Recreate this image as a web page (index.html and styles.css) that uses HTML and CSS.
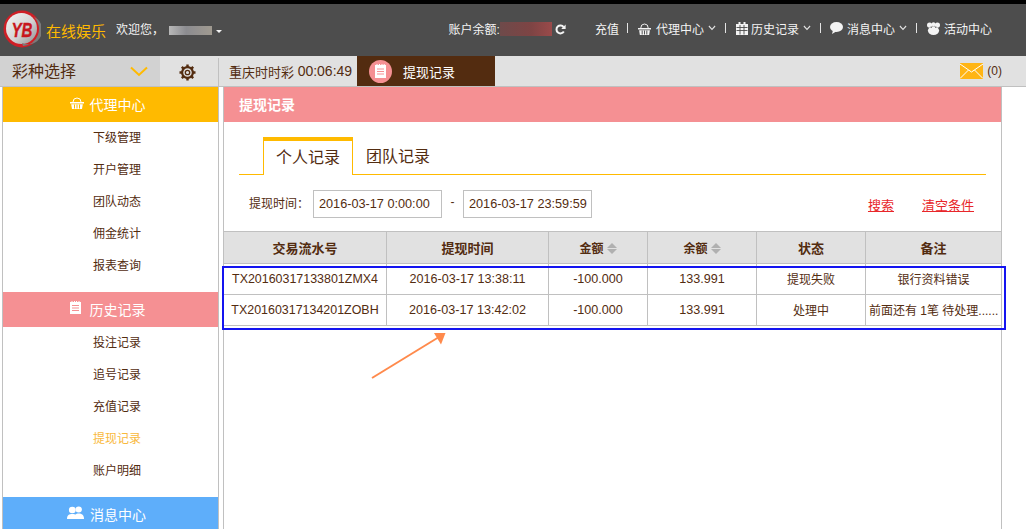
FILE: index.html
```html
<!DOCTYPE html>
<html lang="zh-CN">
<head>
  <meta charset="UTF-8">
  <title>提现记录</title>
  <link rel="stylesheet" href="styles.css">
</head>
<body>
  <div class="page">
    <div class="header">
      <div class="logo">
        <svg width="38" height="38" viewBox="0 0 38 38">
          <defs>
            <linearGradient id="silver" x1="0" y1="0" x2="1" y2="1">
              <stop offset="0" stop-color="#f4f4f4"/>
              <stop offset="0.55" stop-color="#d4d4d4"/>
              <stop offset="1" stop-color="#8e8e8e"/>
            </linearGradient>
          </defs>
          <circle cx="19" cy="19" r="18.5" fill="#cf1f26"/>
          <circle cx="18.5" cy="18.5" r="15.5" fill="url(#silver)"/>
          <path d="M31 7A17 17 0 0 1 20 36L19 33A14 14 0 0 0 31 7Z" fill="#7a7a7a"/>
          <text x="19" y="26.5" class="logo-mark" textLength="21" lengthAdjust="spacingAndGlyphs">YB</text>
        </svg>
        <span class="logo-name">在线娱乐</span>
      </div>
      <div class="welcome">欢迎您，</div>
      <div class="user-blur"></div>
      <div class="caret"></div>

      <div class="nav">
        <span class="balance-label">账户余额:</span>
        <span class="balance-blur"></span>
        <svg class="refresh" width="11" height="11" viewBox="0 0 12 12"><path d="M9.6 8.2A4.3 4.3 0 1 1 9.4 3.4" fill="none" stroke="#f4f4f4" stroke-width="2.2"/><path d="M11.6 0.6V5.4H6.8Z" fill="#f4f4f4"/></svg>
        <a class="nav-link first">充值</a>
        <i class="sep"></i>
        <a class="nav-link gap-5">
          <svg width="13" height="13" viewBox="0 0 14 13" preserveAspectRatio="none"><path d="M3 6A4 4 0 0 1 11 6" fill="none" stroke="#f4f4f4"/><path d="M0 6H14V7.5H0ZM1.2 8.3H12.8L12 13H2Z" fill="#f4f4f4"/><path d="M4.5 8.5V12.5M7 8.5V12.5M9.5 8.5V12.5" stroke="#4d4d4d"/></svg>
          <span>代理中心</span>
          <svg class="chev" width="8" height="6" viewBox="0 0 9 6" preserveAspectRatio="none"><path d="M1 1L4.5 4.5L8 1" fill="none" stroke="#e4e4e4" stroke-width="1.2"/></svg>
        </a>
        <i class="sep sep-wide"></i>
        <a class="nav-link gap-3">
          <svg width="12" height="13" viewBox="0 0 12 13"><path d="M2.5 0H4.5V2H7.5V0H9.5V2H12V13H0V2H2.5Z" fill="#f4f4f4"/><path d="M0.5 5.5H11.5M0.5 8.5H11.5M4 3V12.5M8 3V12.5" stroke="#4d4d4d" stroke-width="0.9"/></svg>
          <span>历史记录</span>
          <svg class="chev" width="8" height="6" viewBox="0 0 9 6" preserveAspectRatio="none"><path d="M1 1L4.5 4.5L8 1" fill="none" stroke="#e4e4e4" stroke-width="1.2"/></svg>
        </a>
        <i class="sep sep-wide sep-near"></i>
        <a class="nav-link">
          <svg width="13" height="12" viewBox="0 0 13 12"><ellipse cx="6.5" cy="5" rx="6.5" ry="5" fill="#f4f4f4"/><path d="M3 8L2 12L7 9Z" fill="#f4f4f4"/></svg>
          <span>消息中心</span>
          <svg class="chev" width="8" height="6" viewBox="0 0 9 6" preserveAspectRatio="none"><path d="M1 1L4.5 4.5L8 1" fill="none" stroke="#e4e4e4" stroke-width="1.2"/></svg>
        </a>
        <i class="sep sep-wide"></i>
        <a class="nav-link">
          <svg width="13" height="13" viewBox="0 0 13 13"><circle cx="2.6" cy="3" r="2.6" fill="#f4f4f4"/><circle cx="10.4" cy="3" r="2.6" fill="#f4f4f4"/><circle cx="6.5" cy="2.2" r="2" fill="#f4f4f4"/><ellipse cx="6.5" cy="8.6" rx="5.6" ry="4.4" fill="#f4f4f4"/><path d="M3.5 5.2H5M8 5.2H9.5" stroke="#4d4d4d"/></svg>
          <span>活动中心</span>
        </a>
      </div>
    </div>

    <div class="subbar">
      <div class="lottery-select">
        <span class="lottery-name">彩种选择</span>
        <svg width="18" height="11" viewBox="0 0 18 11"><path d="M1 1.5L9 9L17 1.5" fill="none" stroke="#ffba00" stroke-width="2"/></svg>
      </div>
      <div class="gear">
        <svg width="17" height="17" viewBox="0 0 17 17"><circle cx="8.5" cy="8.5" r="5.4" fill="none" stroke="#532c10" stroke-width="2.2"/><circle cx="8.5" cy="8.5" r="2.2" fill="none" stroke="#532c10" stroke-width="1.3"/><path d="M8.5 0.5V3M8.5 14V16.5M0.5 8.5H3M14 8.5H16.5M2.8 2.8L4.6 4.6M12.4 12.4L14.2 14.2M2.8 14.2L4.6 12.4M12.4 4.6L14.2 2.8" stroke="#532c10" stroke-width="2.4"/></svg>
      </div>
      <div class="countdown">重庆时时彩 <span class="countdown-time">00:06:49</span></div>
      <div class="current-tab">
        <span class="current-icon">
          <svg width="11" height="14" viewBox="0 0 11 14"><path d="M0 1H11V14H0Z" fill="#fff"/><path d="M2 0V2.5M4.5 0V2.5M7 0V2.5M9.2 0V2.5" stroke="#fff"/><path d="M2 5H9M2 7.5H9M2 10H9" stroke="#f59093"/></svg>
        </span>
        提现记录
      </div>
      <div class="mail">
        <svg width="23" height="16" viewBox="0 0 23 16"><rect width="23" height="16" fill="#ffb515"/><path d="M0 1L11.5 9L23 1M0 15.5L8.5 7M23 15.5L14.5 7" fill="none" stroke="#fff" stroke-width="1"/></svg>
        <span>(0)</span>
      </div>
    </div>

    <div class="content">
      <div class="sidebar">
        <div class="side-head side-orange">
          <svg width="14" height="13" viewBox="0 0 14 13"><path d="M3 6A4 4 0 0 1 11 6" fill="none" stroke="#fff"/><path d="M0 6H14V7.5H0ZM1.2 8.3H12.8L12 13H2Z" fill="#fff"/><path d="M4.5 8.5V12.5M7 8.5V12.5M9.5 8.5V12.5" stroke="#ffba00"/></svg>
          <span>代理中心</span>
        </div>
        <ul class="side-list">
          <li>下级管理</li>
          <li>开户管理</li>
          <li>团队动态</li>
          <li>佣金统计</li>
          <li>报表查询</li>
        </ul>
        <div class="side-head side-pink">
          <svg width="11" height="13" viewBox="0 0 11 13"><path d="M0 1H11V13H0Z" fill="#fff"/><path d="M2 0V2M4.5 0V2M6.5 0V2M9 0V2" stroke="#fff"/><path d="M2 4.5H9M2 7H9M2 9.5H9" stroke="#f59093"/></svg>
          <span>历史记录</span>
        </div>
        <ul class="side-list">
          <li>投注记录</li>
          <li>追号记录</li>
          <li>充值记录</li>
          <li class="active">提现记录</li>
          <li>账户明细</li>
        </ul>
        <div class="side-head side-blue">
          <svg width="17" height="13" viewBox="0 0 16 13" preserveAspectRatio="none"><circle cx="11" cy="3.5" r="3" fill="#fff"/><path d="M7 13C7 9 8 7.5 11 7.5S16 9 16 13Z" fill="#fff"/><circle cx="5" cy="4" r="3.2" fill="#fff"/><path d="M0 13C0 9 2 8 5 8S10 9 10 13Z" fill="#fff"/></svg>
          <span>消息中心</span>
        </div>
      </div>

      <div class="main">
        <div class="main-head">提现记录</div>
        <div class="tabs">
          <a class="tab selected">个人记录</a>
          <a class="tab">团队记录</a>
        </div>
        <div class="filter">
          <label>提现时间：</label>
          <input type="text" value="2016-03-17 0:00:00">
          <span class="dash">-</span>
          <input type="text" value="2016-03-17 23:59:59">
          <div class="filter-links">
            <a href="#">搜索</a>
            <a href="#">清空条件</a>
          </div>
        </div>
        <table>
          <colgroup>
            <col class="c-no"><col class="c-time"><col class="c-amount"><col class="c-bal"><col class="c-state"><col class="c-note">
          </colgroup>
          <thead>
            <tr>
              <th>交易流水号</th>
              <th>提现时间</th>
              <th class="sortable">金额<i class="sort"></i></th>
              <th class="sortable">余额<i class="sort"></i></th>
              <th>状态</th>
              <th>备注</th>
            </tr>
          </thead>
          <tbody>
            <tr>
              <td class="num serial">TX20160317133801ZMX4</td>
              <td class="num">2016-03-17 13:38:11</td>
              <td class="num">-100.000</td>
              <td class="num">133.991</td>
              <td class="text">提现失败</td>
              <td class="text">银行资料错误</td>
            </tr>
            <tr>
              <td class="num serial">TX20160317134201ZOBH</td>
              <td class="num">2016-03-17 13:42:02</td>
              <td class="num">-100.000</td>
              <td class="num">133.991</td>
              <td class="text">处理中</td>
              <td class="text note">前面还有 1笔 待处理......</td>
            </tr>
          </tbody>
        </table>
      </div>
    </div>

    <!-- annotation drawn over the screenshot -->
    <div class="mark-box"></div>
    <svg class="mark-arrow" width="80" height="52" viewBox="0 0 80 52"><path d="M1 48L68 7" stroke="#ff8a4c" stroke-width="2" fill="none"/><path d="M63 3H74.5L70 14.5Z" fill="#ff8a4c"/></svg>
  </div>
</body>
</html>
```

FILE: styles.css
```css
body {
  margin: 0;
  background-color: #fff;
  color: #532c10;
  font-family: "Liberation Sans", "Noto Sans CJK SC", sans-serif;
  font-size: 12px;
}

.page {
  position: relative;
  height: 529px;
  overflow: hidden;
}

/* top bar */
.header {
  display: flex;
  align-items: center;
  height: 52px;
  border-top: 4px solid #000;
  background-color: #4d4d4d;
  color: #f4f4f4;
}

.logo {
  display: flex;
  align-items: center;
  margin-left: 3px;
}

.logo svg {
  display: block;
  margin-bottom: 2px;
}

.logo-mark {
  font-family: "Liberation Sans", sans-serif;
  font-size: 21px;
  font-weight: bold;
  font-style: italic;
  text-anchor: middle;
  fill: #c8161d;
  stroke: #c8161d;
  stroke-width: 0.4px;
}

.logo-name {
  margin-left: 5px;
  color: #ffba00;
  font-size: 15px;
}

.welcome {
  margin-left: 10px;
  margin-bottom: 4px;
  width: 53px;
}

.user-blur {
  width: 43px;
  height: 9px;
  background: linear-gradient(90deg, #b8b8b8, #8c8c90 40%, #a09a90);
}

.caret {
  width: 0;
  height: 0;
  margin: 2px 0 0 4px;
  border-left: 3.5px solid transparent;
  border-right: 3.5px solid transparent;
  border-top: 3.5px solid #f4f4f4;
}

.nav {
  display: flex;
  align-items: center;
  margin-left: auto;
  padding-right: 34px;
  margin-bottom: 4px;
}

.balance-blur {
  width: 52px;
  height: 14px;
  margin-top: 2px;
  background: linear-gradient(90deg, #6e4a4a, #7e4444 60%, #9a4a4a);
}

.refresh {
  margin-left: 3px;
  margin-top: 2px;
}

.nav-link {
  display: flex;
  align-items: center;
  gap: 4px;
}

.nav-link.first {
  margin-left: 29px;
}

.nav-link.gap-5 {
  gap: 5px;
}

.nav-link.gap-3 {
  gap: 3px;
}

.nav-link.gap-3 .chev {
  margin-left: 1px;
}

.nav-link.gap-5 .chev {
  margin-left: -1px;
}

.sep {
  width: 1px;
  height: 10px;
  margin: 0 10px 0 8px;
  background-color: #e4e4e4;
}

.sep-wide {
  margin-left: 9px;
}

.sep-near {
  margin-right: 9px;
}

/* second bar */
.subbar {
  display: flex;
  align-items: stretch;
  height: 30px;
  background-color: #e1e1e1;
}

.lottery-select {
  display: flex;
  align-items: center;
  justify-content: space-between;
  box-sizing: border-box;
  width: 160px;
  padding: 0 12px;
  background-color: #d2d2d2;
  font-size: 16px;
}

.lottery-name {
  margin-bottom: 2px;
}

.gear {
  display: flex;
  align-items: center;
  justify-content: center;
  box-sizing: border-box;
  width: 59px;
  padding-right: 3px;
  border-right: 1px solid #c0c0c0;
  margin: 2px 0 0;
}

.countdown {
  display: flex;
  align-items: center;
  width: 128px;
  margin-left: 10px;
  font-size: 13px;
  white-space: pre;
}

.countdown-time {
  font-size: 14px;
}

.current-tab {
  display: flex;
  align-items: center;
  gap: 11px;
  width: 126px;
  padding-left: 12px;
  background-color: #532c10;
  color: #fff;
  font-size: 13px;
}

.current-icon {
  display: flex;
  align-items: center;
  justify-content: center;
  width: 23px;
  height: 23px;
  border-radius: 50%;
  background-color: #f59093;
}

.mail {
  display: flex;
  align-items: center;
  gap: 4px;
  margin-left: auto;
  padding-right: 24px;
}

/* sidebar + main */
.content {
  display: flex;
  align-items: flex-start;
  border-top: 1px solid #c0c0c0;
}

.sidebar {
  box-sizing: border-box;
  width: 217px;
  height: 442px;
  margin-left: 2px;
  border-left: 1px solid #c0c0c0;
  border-right: 1px solid #c0c0c0;
}

.side-head {
  display: flex;
  align-items: center;
  justify-content: center;
  gap: 6px;
  box-sizing: border-box;
  height: 35px;
  padding: 0 6px 2px 0;
  color: #fff;
  font-size: 14px;
}

.side-head svg {
  margin-bottom: 2px;
}

.side-orange {
  background-color: #ffba00;
}

.side-pink {
  gap: 9px;
  background-color: #f59093;
}

.side-blue {
  padding-right: 8px;
  background-color: #5eaefa;
}

.side-list {
  list-style: none;
  margin: 0;
  padding: 0 0 10px 90px;
}

.side-list li {
  height: 32px;
  line-height: 32px;
}

.side-list li.active {
  color: #f9b93c;
}

.main {
  box-sizing: border-box;
  width: 779px;
  height: 442px;
  margin-left: 4px;
  border-left: 1px solid #c0c0c0;
  border-right: 1px solid #c0c0c0;
}

.main-head {
  height: 35px;
  line-height: 37px;
  padding-left: 15px;
  background-color: #f59093;
  color: #fff;
  font-size: 14px;
  font-weight: bold;
}

.tabs {
  display: flex;
  height: 37px;
  margin: 15px 15px 0;
  padding-left: 24px;
  border-bottom: 1px solid #ffba00;
}

.tab {
  box-sizing: border-box;
  width: 90px;
  height: 38px;
  line-height: 40px;
  text-align: center;
  font-size: 16px;
}

.tab.selected {
  border: 1px solid #ffba00;
  border-top-width: 4px;
  border-bottom: none;
  background-color: #fff;
  line-height: 33px;
}

.filter {
  display: flex;
  align-items: center;
  height: 28px;
  margin-top: 15px;
  padding: 0 27px 0 25px;
}

.filter label {
  width: 64px;
  margin-bottom: 4px;
}

.filter input {
  box-sizing: border-box;
  width: 129px;
  height: 28px;
  padding: 0 2px 0 5px;
  border: 1px solid #c0c0c0;
  color: #532c10;
  font-family: inherit;
  font-size: 12.7px;
}

.dash {
  width: 21px;
  text-align: center;
  margin-bottom: 4px;
}

.filter-links {
  display: flex;
  gap: 28px;
  margin-left: auto;
}

.filter-links a {
  color: #e8262a;
  font-size: 13px;
}

table {
  width: 777px;
  margin-top: 13px;
  border-collapse: separate;
  border-spacing: 0;
  table-layout: fixed;
}

.c-no { width: 163px; }
.c-time { width: 162px; }
.c-amount { width: 99px; }
.c-bal { width: 109px; }
.c-state { width: 109px; }
.c-note { width: 135px; }

th, td {
  padding: 0;
  border-right: 1px solid #c0c0c0;
  border-bottom: 1px solid #c0c0c0;
  text-align: center;
  white-space: nowrap;
  overflow: hidden;
}

th:last-child, td:last-child {
  border-right: none;
}

th {
  height: 31px;
  border-top: 1px solid #c0c0c0;
  background-color: #e1e1e1;
  font-size: 13px;
}

th.sortable {
  font-size: 12px;
}

td {
  height: 30px;
}

td.num {
  font-size: 12.6px;
}

td.serial {
  font-size: 12.45px;
}

td.text {
  height: 28px;
  padding-bottom: 2px;
}

td.note {
  text-align: left;
  padding-left: 3px;
}

.sort {
  display: inline-block;
  position: relative;
  width: 10px;
  height: 11px;
  margin-left: 3px;
  vertical-align: -1px;
}

.sort::before, .sort::after {
  content: "";
  position: absolute;
  left: 0;
  border-left: 5px solid transparent;
  border-right: 5px solid transparent;
}

.sort::before {
  top: 0;
  border-bottom: 5px solid #b0b0b0;
}

.sort::after {
  bottom: 0;
  border-top: 5px solid #b0b0b0;
}

/* annotation */
.mark-box {
  position: absolute;
  left: 222px;
  top: 266px;
  width: 780px;
  height: 60px;
  border: 2px solid #1414f0;
}

.mark-arrow {
  position: absolute;
  left: 371px;
  top: 330px;
}
```
